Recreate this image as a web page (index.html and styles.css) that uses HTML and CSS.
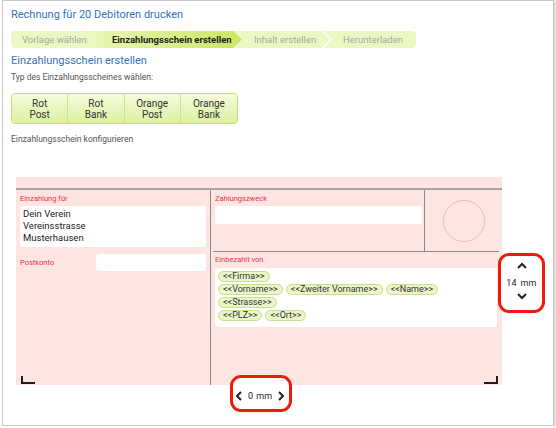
FILE: index.html
```html
<!DOCTYPE html>
<html lang="de">
<head>
    <meta charset="UTF-8">
    <title>Rechnung drucken</title>
    <link rel="stylesheet" href="styles.css">
</head>
<body>
    <div class="panel">
        <h1 class="title">Rechnung für 20 Debitoren drucken</h1>

        <div class="steps">
            <div class="step step-first">Vorlage wählen</div>
            <div class="step active">Einzahlungsschein erstellen</div>
            <div class="step step-third">Inhalt erstellen</div>
            <svg class="chev" width="10" height="17" viewBox="0 0 10 17"><polyline points="0.5,0 9,8.5 0.5,17" fill="none" stroke="#fff" stroke-width="1.5"/></svg>
            <div class="step step-last">Herunterladen</div>
        </div>

        <h2 class="subtitle">Einzahlungsschein erstellen</h2>
        <p class="hint">Typ des Einzahlungsscheines wählen:</p>

        <div class="types">
            <button class="type">Rot<br>Post</button>
            <button class="type">Rot<br>Bank</button>
            <button class="type">Orange<br>Post</button>
            <button class="type">Orange<br>Bank</button>
        </div>

        <p class="hint hint-config">Einzahlungsschein konfigurieren</p>

        <div class="slip">
            <div class="slip-body">
                <div class="slip-left">
                    <div class="label">Einzahlung für</div>
                    <div class="field address">
                        Dein Verein<br>
                        Vereinsstrasse<br>
                        Musterhausen
                    </div>
                    <div class="account-row">
                        <div class="label">Postkonto</div>
                        <div class="field account"></div>
                    </div>
                </div>
                <div class="slip-right">
                    <div class="right-top">
                        <div class="purpose">
                            <div class="label">Zahlungszweck</div>
                            <div class="field purpose-input"></div>
                        </div>
                        <div class="stamp">
                            <span class="stamp-circle"></span>
                        </div>
                    </div>
                    <div class="divider"></div>
                    <div class="payer">
                        <div class="label">Einbezahlt von</div>
                        <div class="field payer-box">
                            <div class="tag-row"><span class="tag">&lt;&lt;Firma&gt;&gt;</span></div>
                            <div class="tag-row">
                                <span class="tag">&lt;&lt;Vorname&gt;&gt;</span>
                                <span class="tag">&lt;&lt;Zweiter Vorname&gt;&gt;</span>
                                <span class="tag">&lt;&lt;Name&gt;&gt;</span>
                            </div>
                            <div class="tag-row"><span class="tag">&lt;&lt;Strasse&gt;&gt;</span></div>
                            <div class="tag-row">
                                <span class="tag">&lt;&lt;PLZ&gt;&gt;</span>
                                <span class="tag">&lt;&lt;Ort&gt;&gt;</span>
                            </div>
                        </div>
                    </div>
                </div>
            </div>
            <span class="crop crop-left"></span>
            <span class="crop crop-right"></span>
        </div>

        <!-- offset controls -->
        <div class="offset offset-v">
            <svg width="10" height="7" viewBox="0 0 10 7"><polyline points="1,6 5,2 9,6" fill="none" stroke="#222" stroke-width="2"/></svg>
            <span class="offset-value">14 mm</span>
            <svg width="10" height="7" viewBox="0 0 10 7"><polyline points="1,1 5,5 9,1" fill="none" stroke="#222" stroke-width="2"/></svg>
        </div>
        <div class="offset offset-h">
            <svg width="7" height="10" viewBox="0 0 7 10"><polyline points="6,1 2,5 6,9" fill="none" stroke="#222" stroke-width="2"/></svg>
            <span class="offset-value">0 mm</span>
            <svg width="7" height="10" viewBox="0 0 7 10"><polyline points="1,1 5,5 1,9" fill="none" stroke="#222" stroke-width="2"/></svg>
        </div>
    </div>
</body>
</html>
```

FILE: styles.css
```css
* {
    box-sizing: border-box;
}

body {
    margin: 0;
    background: #fff;
    font-family: Roboto, "Liberation Sans", sans-serif;
    color: #333;
}

.panel {
    position: relative;
    margin: 0 2px;
    height: 426px;
    padding: 7px 8px 0;
    border: 1px solid #c9c9c9;
    box-shadow: 1px 1px 2px rgba(0,0,0,0.25);
    background: #fff;
}

.title {
    margin: 0;
    font-size: 11px;
    line-height: 14px;
    font-weight: normal;
    color: #3473bd;
}

/* wizard steps */
.steps {
    display: flex;
    width: 405px;
    height: 17px;
    margin-top: 9px;
    background: #ebf8c3;
    border-radius: 4px;
}

.step {
    font-size: 9.5px;
    line-height: 17px;
    color: #a6ab9f;
    white-space: nowrap;
}

.step-first {
    width: 79px;
    padding-left: 11px;
}

.step.active {
    width: 152px;
    padding-left: 22px;
    font-weight: bold;
    color: #222;
    background: linear-gradient(to right, #eaf7b8, #cbe760);
    clip-path: polygon(0 0, calc(100% - 9px) 0, 100% 50%, calc(100% - 9px) 100%, 0 100%, 9px 50%);
}

.step-third {
    width: 80px;
    padding-left: 12px;
}

.chev {
    display: block;
}

.step-last {
    width: 84px;
    padding-left: 11px;
}

.subtitle {
    margin: 6px 0 0;
    font-size: 11px;
    line-height: 14px;
    font-weight: normal;
    color: #3473bd;
}

.hint {
    margin: 3px 0 0;
    font-size: 8.5px;
    line-height: 12px;
    color: #555;
}

.types {
    display: flex;
    width: 227px;
    margin-top: 10px;
    border: 1px solid #c3df62;
    border-radius: 4px;
    overflow: hidden;
}

.type {
    width: 57px;
    height: 29px;
    padding: 0;
    border: none;
    border-right: 1px solid #cfe58c;
    background: linear-gradient(#f4fbdc, #dcf1a0);
    font-family: inherit;
    font-size: 10px;
    line-height: 11px;
    color: #333;
    text-align: center;
}

.type:last-child {
    border-right: none;
}

.hint-config {
    margin-top: 9px;
}

/* payment slip */
.slip {
    position: relative;
    width: 486px;
    height: 208px;
    margin: 32px 0 0 5px;
    padding-top: 11px;
    background: #fde6e2;
}

.slip-body {
    display: grid;
    grid-template-columns: 195px 1fr;
    height: 197px;
    border-top: 2px solid #aca4a2;
}

.label {
    font-size: 7.5px;
    line-height: 10px;
    color: #e5344b;
}

.field {
    background: #fff;
    border-radius: 3px;
}

.slip-left {
    padding: 4px 4px 0;
    border-right: 1px solid #8f8a89;
}

.address {
    height: 41px;
    margin-top: 2px;
    padding: 2px 3px;
    font-size: 9.5px;
    line-height: 12px;
    color: #222;
}

.account-row {
    display: flex;
    justify-content: space-between;
    align-items: center;
    margin-top: 7px;
}

.account {
    width: 110px;
    height: 17px;
}

.right-top {
    display: flex;
    height: 61px;
}

.purpose {
    width: 214px;
    padding: 4px 2px 0 4px;
    border-right: 1px solid #8f8a89;
}

.purpose-input {
    height: 18px;
    margin-top: 2px;
}

.stamp {
    flex: 1;
    display: flex;
    align-items: center;
    justify-content: center;
}

.stamp-circle {
    width: 42px;
    height: 42px;
    border: 1px solid #f6b6be;
    border-radius: 50%;
}

.divider {
    height: 1px;
    margin: 0 3px 0 2px;
    background: #8f8a89;
}

.payer {
    padding: 3px 5px 0 4px;
}

.payer-box {
    height: 59px;
    margin-top: 3px;
    padding: 3px 3px 0;
}

.tag-row {
    display: flex;
    gap: 3px;
    margin-bottom: 2px;
}

.tag {
    height: 11px;
    padding: 0 4px;
    border: 1px solid #c9de8e;
    border-radius: 6px;
    background: #e9f6c6;
    font-size: 9px;
    line-height: 9px;
    color: #333;
}

.crop {
    position: absolute;
    bottom: 1px;
    width: 14px;
    height: 8px;
    border-bottom: 2px solid #1e1e1e;
}

.crop-left {
    left: 5px;
    border-left: 2px solid #1e1e1e;
}

.crop-right {
    right: 4px;
    border-right: 2px solid #1e1e1e;
}

/* highlighted offset controls */
.offset {
    position: absolute;
    display: flex;
    align-items: center;
    border: 3px solid #f2190c;
    border-radius: 11px;
    background: #fff;
}

.offset svg {
    display: block;
}

.offset-value {
    font-size: 9px;
    line-height: 12px;
    color: #222;
    word-spacing: 1px;
}

.offset-v {
    left: 495px;
    top: 252px;
    width: 47px;
    height: 60px;
    flex-direction: column;
    padding-top: 6px;
}

.offset-v .offset-value {
    margin: 8px 0 4px;
    letter-spacing: 0.3px;
}

.offset-h {
    left: 227px;
    top: 374px;
    width: 62px;
    height: 37px;
    padding: 4px 0 0 2px;
    gap: 6px;
}
```
